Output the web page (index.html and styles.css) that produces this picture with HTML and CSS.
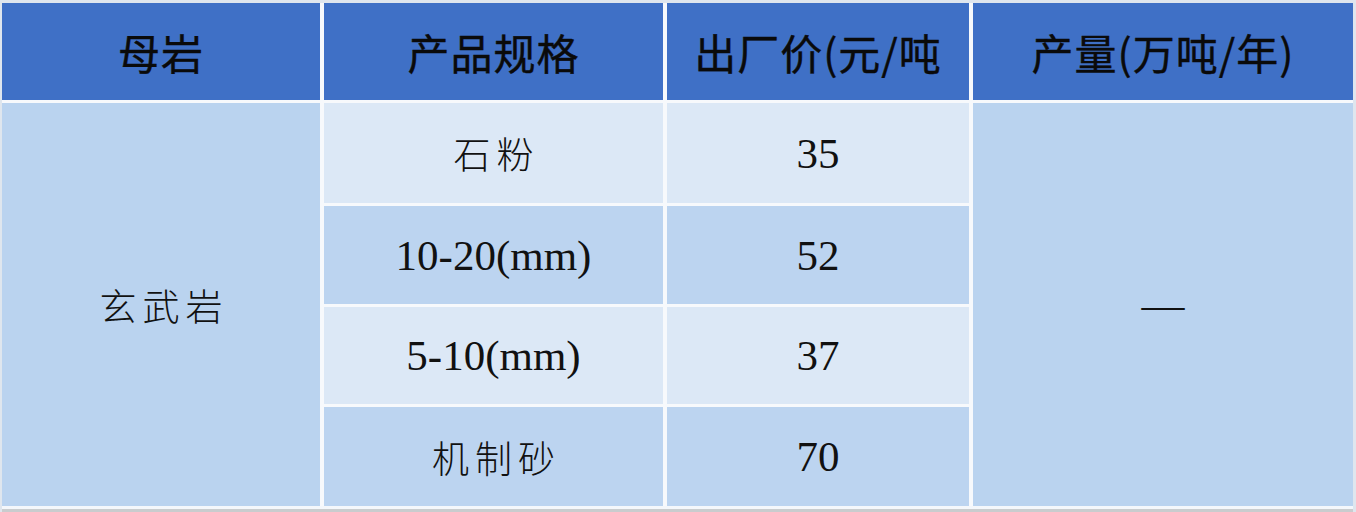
FILE: index.html
```html
<!DOCTYPE html>
<html lang="zh">
<head>
<meta charset="utf-8">
<link rel="stylesheet" href="styles.css">
</head>
<body>
<div class="table">
  <div class="cell head">母岩</div>
  <div class="cell head">产品规格</div>
  <div class="cell head">出厂价(元/吨</div>
  <div class="cell head">产量(万吨/年)</div>

  <div class="cell merged col1 cjk">玄武岩</div>
  <div class="cell light cjk">石粉</div>
  <div class="cell light num">35</div>
  <div class="cell merged col4 num">—</div>

  <div class="cell dark num">10-20(mm)</div>
  <div class="cell dark num">52</div>

  <div class="cell light num">5-10(mm)</div>
  <div class="cell light num">37</div>

  <div class="cell dark cjk">机制砂</div>
  <div class="cell dark num">70</div>
</div>
</body>
</html>
```

FILE: styles.css
```css
html, body {
  margin: 0;
  padding: 0;
}
body {
  width: 1356px;
  height: 512px;
  background: #dfe6ee;
  padding: 3px 0 0 2px;
  box-sizing: border-box;
  overflow: hidden;
}
.table {
  display: grid;
  grid-template-columns: 318px 339px 302px 380px;
  grid-template-rows: 97px 100px 98px 97px 99px;
  column-gap: 4px;
  row-gap: 3px;
  width: 1351px;
  background: #f7f9fc;
  border-bottom: 3px solid #f4f7fb;
  box-shadow: 0 4px 0 #c9ccce;
}
.cell {
  display: flex;
  align-items: center;
  justify-content: center;
  color: #111;
}
.head {
  background: #3f70c6;
  font-family: "Noto Sans CJK SC", "Noto Sans", sans-serif;
  font-weight: 400;
  font-size: 42px;
  letter-spacing: 1px;
  color: #0a0a0a;
  -webkit-text-stroke: 0.4px #0a0a0a;
}
.light {
  background: #dce8f6;
}
.dark {
  background: #bcd4f0;
}
.merged {
  background: #bad3ef;
  grid-row: 2 / span 4;
}
.col1 { grid-column: 1; }
.col4 { grid-column: 4; }
.cjk {
  font-family: "Noto Sans CJK SC", sans-serif;
  font-weight: 300;
  font-size: 37px;
  letter-spacing: 6px;
  padding-left: 6px;
}
.num {
  font-family: "Liberation Serif", "Times New Roman", serif;
  font-size: 43px;
}
```
